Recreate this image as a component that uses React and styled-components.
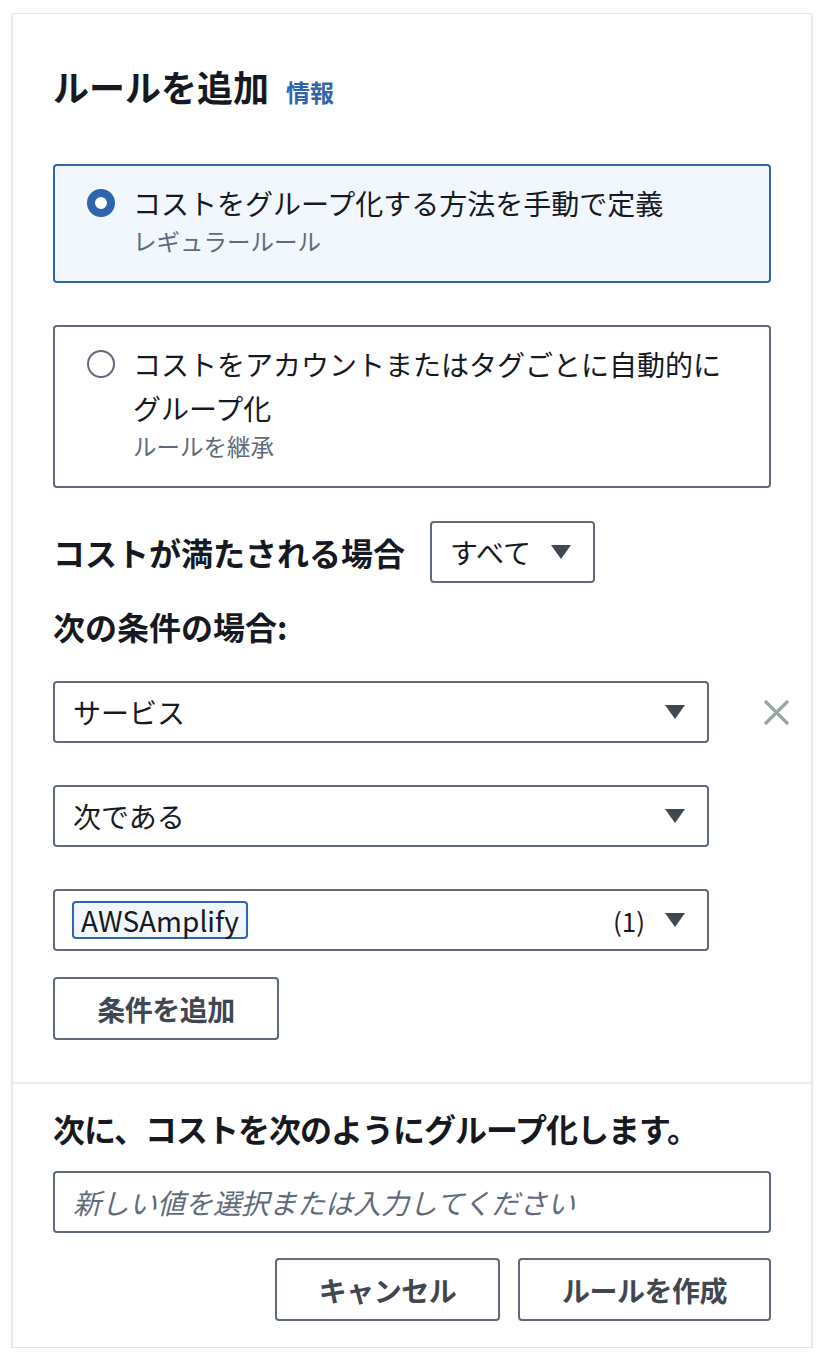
import React from "react";
import styled, { createGlobalStyle } from "styled-components";

const Global = createGlobalStyle`
  html, body { margin: 0; padding: 0; background: #ffffff; }
  body { font-family: "Noto Sans CJK JP", "Noto Sans", sans-serif; color: #16191f; }
  * { box-sizing: border-box; }
`;

const BLUE = "#2f64ae";
const GRAY = "#5f6b7a";

const Card = styled.div`
  margin: 13px 20px 0 12px;
  width: 800px;
  border: 1px solid #e3e5e8;
  border-radius: 2px;
  box-shadow: 0 2px 3px rgba(0, 0, 0, 0.18);
  background: #fff;
`;

const Section = styled.div`
  padding: ${(p) => p.$pad};
  display: flex;
  flex-direction: column;
`;

const Divider = styled.div`
  height: 2px;
  background: #e9ebed;
`;

const TitleRow = styled.div`
  display: flex;
  align-items: baseline;
  gap: 17px;
  line-height: 44px;
`;

const Title = styled.h2`
  margin: 0;
  font-size: 36px;
  font-weight: 700;
`;

const InfoLink = styled.a`
  color: ${BLUE};
  font-size: 24px;
  font-weight: 700;
  text-decoration: none;
`;

const Tile = styled.label`
  display: flex;
  align-items: flex-start;
  gap: 18px;
  padding: 15px 30px 24px 32px;
  border: 2px solid ${(p) => (p.$checked ? BLUE : GRAY)};
  border-radius: 4px;
  background: ${(p) => (p.$checked ? "#f1f7fd" : "#fff")};
  margin-top: ${(p) => p.$mt}px;
`;

const Radio = styled.span`
  flex: none;
  width: 28px;
  height: 28px;
  margin-top: 8px;
  border-radius: 50%;
  border: ${(p) => (p.$checked ? `8px solid ${BLUE}` : `2px solid ${GRAY}`)};
  background: #fff;
`;

const TileText = styled.div`
  display: flex;
  flex-direction: column;
`;

const TileLabel = styled.div`
  font-size: 28px;
  line-height: 44px;
  color: #16191f;
`;

const TileDesc = styled.div`
  font-size: 23.5px;
  line-height: 32px;
  color: ${GRAY};
`;

const InlineRow = styled.div`
  display: flex;
  align-items: center;
  gap: 25px;
  margin-top: 33px;
`;

const Heading = styled.div`
  font-size: 32px;
  font-weight: 700;
  line-height: 44px;
  margin-top: ${(p) => p.$mt || 0}px;
  letter-spacing: ${(p) => p.$ls || 0}px;
  white-space: nowrap;
`;

const SelectBox = styled.div`
  flex: none;
  display: flex;
  align-items: center;
  height: 62px;
  width: ${(p) => p.$w};
  padding: 0 22px 0 ${(p) => p.$pl || 18}px;
  border: 2px solid ${GRAY};
  border-radius: 4px;
  background: #fff;
  font-size: 28px;
  color: #16191f;
`;

const SelectValue = styled.span`
  flex: 1;
  white-space: nowrap;
`;

const Count = styled.span`
  font-size: 26px;
  margin-right: 20px;
  color: #16191f;
`;

const Caret = styled.svg`
  flex: none;
  width: 20px;
  height: 14px;
`;

const ConditionRow = styled.div`
  display: flex;
  align-items: center;
  gap: 54px;
  margin-top: ${(p) => p.$mt}px;
`;

const RemoveIcon = styled.svg`
  width: 27px;
  height: 27px;
  flex: none;
`;

const Token = styled.span`
  display: inline-flex;
  align-items: center;
  height: 38px;
  padding: 0 7px;
  border: 2px solid ${BLUE};
  border-radius: 4px;
  background: #f1f7fd;
  font-size: 28px;
  color: #16191f;
`;

const Button = styled.button`
  height: 63px;
  width: ${(p) => p.$w}px;
  border: 2px solid ${GRAY};
  border-radius: 4px;
  background: #fff;
  font-family: inherit;
  font-size: 28px;
  font-weight: 700;
  color: #414750;
  letter-spacing: -0.5px;
  margin-top: ${(p) => p.$mt || 0}px;
  align-self: ${(p) => p.$self || "auto"};
  cursor: pointer;
`;

const Input = styled.input`
  height: 62px;
  width: 100%;
  margin-top: 21px;
  padding: 0 18px;
  border: 2px solid ${GRAY};
  border-radius: 4px;
  font-family: inherit;
  font-size: 28px;
  &::placeholder {
    color: ${GRAY};
    font-style: italic;
  }
`;

const Actions = styled.div`
  display: flex;
  justify-content: flex-end;
  gap: 18px;
  margin-top: 25px;
`;

const CaretIcon = () => (
  <Caret viewBox="0 0 20 14">
    <path d="M0 0 H20 L10 14 Z" fill="#414750" />
  </Caret>
);

export default function App() {
  return (
    <>
      <Global />
      <Card>
        <Section $pad="50px 40px 42px 40px">
          <TitleRow>
            <Title>ルールを追加</Title>
            <InfoLink href="#">情報</InfoLink>
          </TitleRow>

          <Tile $checked $mt={50}>
            <Radio $checked />
            <TileText>
              <TileLabel>コストをグループ化する方法を手動で定義</TileLabel>
              <TileDesc>レギュラールール</TileDesc>
            </TileText>
          </Tile>

          <Tile $mt={42}>
            <Radio />
            <TileText>
              <TileLabel>コストをアカウントまたはタグごとに自動的に<br />グループ化</TileLabel>
              <TileDesc>ルールを継承</TileDesc>
            </TileText>
          </Tile>

          <InlineRow>
            <Heading>コストが満たされる場合</Heading>
            <SelectBox $w="165px">
              <SelectValue>すべて</SelectValue>
              <CaretIcon />
            </SelectBox>
          </InlineRow>

          <Heading $mt={21}>次の条件の場合:</Heading>

          <ConditionRow $mt={33}>
            <SelectBox $w="656px">
              <SelectValue>サービス</SelectValue>
              <CaretIcon />
            </SelectBox>
            <RemoveIcon viewBox="0 0 27 27">
              <path d="M2 2 L25 25 M25 2 L2 25" stroke="#9ba7a6" strokeWidth="3.2" fill="none" />
            </RemoveIcon>
          </ConditionRow>

          <ConditionRow $mt={42}>
            <SelectBox $w="656px">
              <SelectValue>次である</SelectValue>
              <CaretIcon />
            </SelectBox>
          </ConditionRow>

          <ConditionRow $mt={42}>
            <SelectBox $w="656px" $pl={17}>
              <SelectValue>
                <Token>AWSAmplify</Token>
              </SelectValue>
              <Count>(1)</Count>
              <CaretIcon />
            </SelectBox>
          </ConditionRow>

          <Button $w={226} $mt={26} $self="flex-start">条件を追加</Button>
        </Section>

        <Divider />

        <Section $pad="22px 40px 26px 40px">
          <Heading $ls={-1}>次に、コストを次のようにグループ化します。</Heading>
          <Input placeholder="新しい値を選択または入力してください" />
          <Actions>
            <Button $w={225}>キャンセル</Button>
            <Button $w={253}>ルールを作成</Button>
          </Actions>
        </Section>
      </Card>
    </>
  );
}
